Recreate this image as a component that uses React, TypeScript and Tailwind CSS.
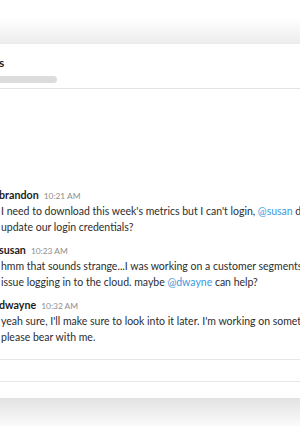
import React from "react";

const Name = ({ name, time }: { name: string; time: string }) => (
  <div className="flex items-baseline gap-[5px] h-[16px] leading-[16px] ml-[-2px]">
    <span className="font-bold text-[10.7px] text-[#1d1c1d]">{name}</span>
    <span className="text-[8.4px] text-[#8e8e8e]">{time}</span>
  </div>
);

const At = ({ children }: { children: React.ReactNode }) => (
  <span className="text-[#3b99e0]">{children}</span>
);

export default function App() {
  return (
    <div
      className="w-[300px] h-[443px] overflow-hidden bg-white relative"
      style={{ fontFamily: "Lato, 'Noto Sans', sans-serif" }}
    >
      <div className="h-[44px] bg-gradient-to-b from-white from-40% to-[#ececec]" />
      <div className="h-[354px] bg-white flex flex-col">
        <div className="h-[45px] border-b border-[#e3e3e3] flex flex-col pt-[9px]">
          <div className="font-bold text-[12px] leading-[20px] text-[#1d1c1d] ml-[-1px]">s</div>
          <div className="mt-[3px] w-[59px] h-[7px] rounded-full bg-[#dcdcdc] ml-[-2px]" />
        </div>
        <div className="flex flex-col mt-[98px] text-[10.5px] leading-[16px] text-[#2c2d30] whitespace-nowrap pl-[1px] gap-[7px]">
          <div>
            <Name name="brandon" time="10:21 AM" />
            <div>I need to download this week's metrics but I can't login, <At>@susan</At> did we</div>
            <div>update our login credentials?</div>
          </div>
          <div>
            <Name name="susan" time="10:23 AM" />
            <div>hmm that sounds strange...I was working on a customer segments report</div>
            <div>issue logging in to the cloud. maybe <At>@dwayne</At> can help?</div>
          </div>
          <div>
            <Name name="dwayne" time="10:32 AM" />
            <div>yeah sure, I'll make sure to look into it later. I'm working on something</div>
            <div>please bear with me.</div>
          </div>
        </div>
        <div className="mt-[14px] h-[23px] border-t border-b border-[#e6e6e6]" />
      </div>
      <div className="h-[28px] bg-gradient-to-b from-[#e2e2e2] to-[#fbfbfb]" />
    </div>
  );
}
